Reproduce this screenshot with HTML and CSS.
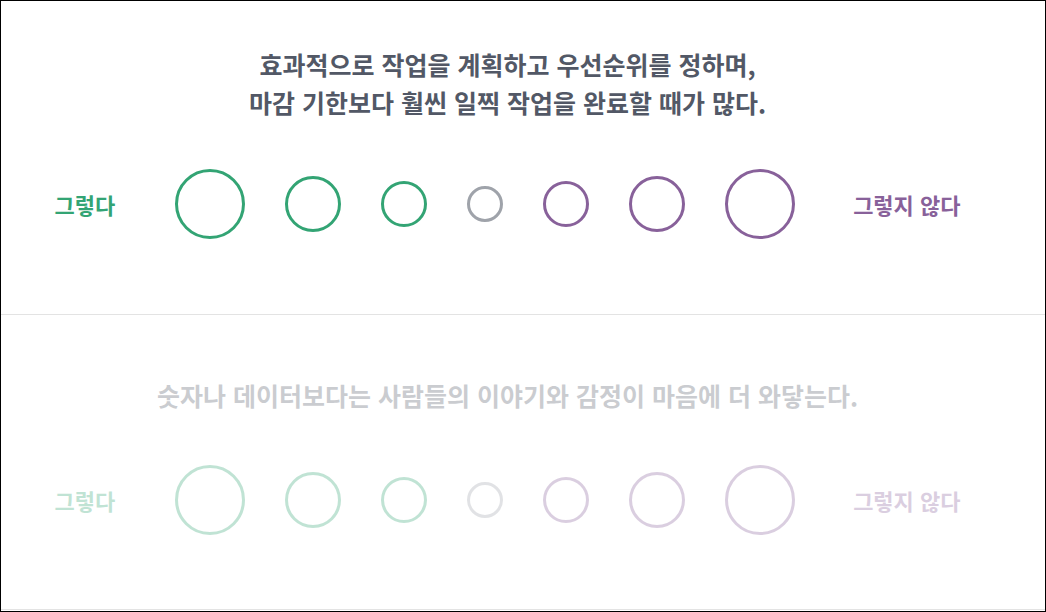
FILE: index.html
```html
<!DOCTYPE html>
<html lang="ko">
<head>
<meta charset="utf-8">
<title>질문</title>
<link rel="stylesheet" href="styles.css">
</head>
<body>
<div class="frame">
  <section class="question question--first">
    <div class="statement">효과적으로 작업을 계획하고 우선순위를 정하며,<br>마감 기한보다 훨씬 일찍 작업을 완료할 때가 많다.</div>
    <div class="scale">
      <div class="label label--agree">그렇다</div>
      <div class="options">
        <span class="opt opt--xl opt--agree"></span>
        <span class="opt opt--lg opt--agree"></span>
        <span class="opt opt--md opt--agree"></span>
        <span class="opt opt--sm opt--neutral"></span>
        <span class="opt opt--md opt--disagree"></span>
        <span class="opt opt--lg opt--disagree"></span>
        <span class="opt opt--xl opt--disagree"></span>
      </div>
      <div class="label label--disagree">그렇지 않다</div>
    </div>
  </section>
  <section class="question question--inactive">
    <div class="statement">숫자나 데이터보다는 사람들의 이야기와 감정이 마음에 더 와닿는다.</div>
    <div class="scale">
      <div class="label label--agree">그렇다</div>
      <div class="options">
        <span class="opt opt--xl opt--agree"></span>
        <span class="opt opt--lg opt--agree"></span>
        <span class="opt opt--md opt--agree"></span>
        <span class="opt opt--sm opt--neutral"></span>
        <span class="opt opt--md opt--disagree"></span>
        <span class="opt opt--lg opt--disagree"></span>
        <span class="opt opt--xl opt--disagree"></span>
      </div>
      <div class="label label--disagree">그렇지 않다</div>
    </div>
  </section>
</div>
</body>
</html>
```

FILE: styles.css
```css
* { box-sizing: border-box; }
html, body { margin: 0; padding: 0; background: #fff; }
body {
  font-family: "Noto Sans CJK KR", "Noto Sans", sans-serif;
  width: 1046px;
  height: 612px;
  overflow: hidden;
}
.frame {
  width: 1046px;
  height: 612px;
  border: 1px solid #000;
  display: flex;
  flex-direction: column;
}
.question {
  display: flex;
  flex-direction: column;
  align-items: center;
  padding-right: 31px;
  border-bottom: 1px solid #e3e3e3;
}
.question--first {
  padding-top: 44px;
  padding-bottom: 75px;
}
.question--first .scale { margin-top: 48px; }
.question--inactive {
  padding-top: 61px;
  padding-bottom: 74px;
}
.question--inactive .statement,
.question--inactive .scale { opacity: 0.3; }
.question--inactive .scale { margin-top: 51px; }
.statement {
  font-size: 25px;
  font-weight: 700;
  line-height: 38px;
  color: #525866;
  text-align: center;
}
.scale {
  display: flex;
  align-items: center;
  height: 70px;
}
.label {
  font-size: 22px;
  font-weight: 700;
  line-height: 28px;
}
.label--agree { width: 120px; color: #33a474; }
.label--disagree { width: 166px; color: #88619a; text-align: right; }
.options {
  display: flex;
  align-items: center;
  gap: 40px;
  width: 620px;
}
.opt {
  display: block;
  border-radius: 50%;
  border: 3px solid;
  flex: none;
}
.opt--xl { width: 70px; height: 70px; }
.opt--lg { width: 56px; height: 56px; }
.opt--md { width: 46px; height: 46px; }
.opt--sm { width: 36px; height: 36px; }
.opt--agree { border-color: #33a474; }
.opt--neutral { border-color: #9fa3aa; }
.opt--disagree { border-color: #88619a; }
```
